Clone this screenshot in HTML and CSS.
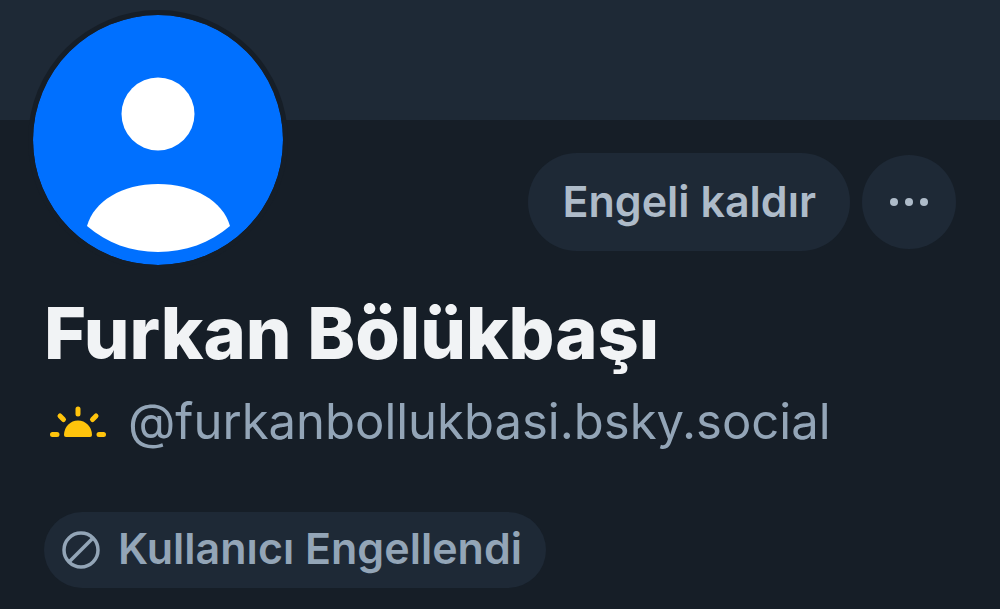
FILE: index.html
```html
<!DOCTYPE html>
<html lang="tr">
<head>
<meta charset="utf-8">
<meta name="viewport" content="width=device-width, initial-scale=1">
<title>Furkan Bölükbaşı</title>
<link rel="stylesheet" href="styles.css">
</head>
<body>
<header class="banner"></header>
<main class="profile">
  <div class="top-row">
    <svg class="avatar" viewBox="0 0 250 250" role="img" aria-label="Avatar">
      <circle cx="125" cy="125" r="125" fill="#0070ff"/>
      <circle cx="125" cy="99" r="36.5" fill="#fff"/>
      <path d="M54 211C61 186 89 169 125 169s65 17 72 42c-20 17-45 26-72 26s-51-9-71-26z" fill="#fff"/>
    </svg>
    <div class="actions">
      <button class="unblock" type="button">Engeli kaldır</button>
      <button class="more" type="button" aria-label="Diğer seçenekler">
        <svg width="40" height="10" viewBox="0 0 40 10" fill="currentColor"><circle cx="5" cy="5" r="4"/><circle cx="20" cy="5" r="4"/><circle cx="35" cy="5" r="4"/></svg>
      </button>
    </div>
  </div>
  <h1 class="name">Furkan Bölükbaşı</h1>
  <p class="handle">
    <svg class="sun" viewBox="0 0 56 32" fill="none" stroke="#ffc40c" stroke-width="5" stroke-linecap="round"><path d="M28 3v5M10 10l3.500 3.500M46 10l-3.500 3.500M2.500 28.500h4.500M49 28.500h4.500"/><path d="M16 31q-2 0-2-2a14 14.500 0 0 1 28 0q0 2-2 2z" fill="#ffc40c" stroke="none"/></svg>
    <span>@furkanbollukbasi.bsky.social</span>
  </p>
  <div class="status">
    <svg class="ban" viewBox="0 0 38 38" fill="none" stroke="currentColor" stroke-width="3.500"><circle cx="19" cy="19" r="17"/><path d="M7 31L31 7"/></svg>
    <span>Kullanıcı Engellendi</span>
  </div>
</main>
</body>
</html>
```
FILE: styles.css
```css
* { box-sizing: border-box; }
body { margin: 0; min-height: 100vh; background: #161e27; color: #f1f3f5; font-family: Inter, sans-serif; }
.banner { height: 120px; background: #1e2936; }
.profile { padding: 0 44px 20px; }
.top-row { display: flex; justify-content: space-between; align-items: flex-start; margin-top: -105px; }
.avatar { flex: none; width: 250px; height: 250px; margin-left: -11px; border-radius: 50%; box-shadow: 0 0 0 5px #161e27; }
.actions { display: flex; align-items: center; gap: 12px; margin-top: 138px; }
button { border: 0; background: #1e2936; color: #aebbc9; font-family: inherit; cursor: pointer; }
.unblock { height: 98px; padding: 0 34px 2px; border-radius: 49px; font-size: 43px; font-weight: 600; }
.more { display: flex; align-items: center; justify-content: center; width: 94px; height: 94px; padding: 0; border-radius: 50%; }
.name { margin: 22px 0 0; font-size: 72px; line-height: 92px; font-weight: 800; }
.handle { display: flex; align-items: center; gap: 22px; margin: 13px 0 0; padding-left: 6px; color: #93a5b7; font-size: 49px; line-height: 60px; }
.sun { flex: none; width: 56px; height: 32px; }
.status { display: inline-flex; align-items: center; gap: 18px; height: 76px; margin-top: 60px; padding: 0 24px 0 18px; border-radius: 38px; background: #1e2936; color: #93a5b7; font-size: 43px; line-height: 52px; font-weight: 600; }
.status span { padding-bottom: 4px; }
.ban { width: 38px; height: 38px; }
```
